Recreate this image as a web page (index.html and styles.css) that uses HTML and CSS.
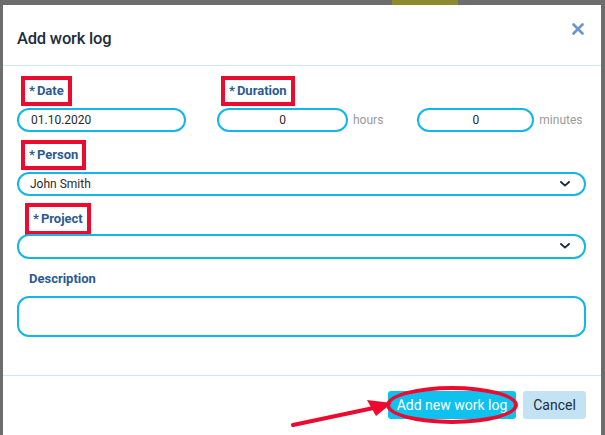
FILE: index.html
```html
<!DOCTYPE html>
<html>
<head>
<meta charset="utf-8">
<link rel="stylesheet" href="styles.css">
</head>
<body>
<div class="page">
  <nav class="nav">
    <span class="nav-add"></span>
  </nav>
</div>

<div class="modal">
  <header class="modal-header">
    <h1 class="modal-title">Add work log</h1>
    <button class="close" aria-label="Close">
      <svg width="12" height="12" viewBox="0 0 12 12"><path d="M1.5 1.5 L10.5 10.5 M10.5 1.5 L1.5 10.5" stroke="#6a96c8" stroke-width="2.6" stroke-linecap="round"/></svg>
    </button>
  </header>

  <div class="modal-body">
    <div class="row-top">
      <div class="field field-date">
        <label class="lbl req mark">Date</label>
        <div class="input">01.10.2020</div>
      </div>
      <div class="field field-duration">
        <label class="lbl req mark">Duration</label>
        <div class="dur-row">
          <div class="input input-num input-hours">0</div>
          <span class="unit unit-hours">hours</span>
          <div class="input input-num input-min">0</div>
          <span class="unit">minutes</span>
        </div>
      </div>
    </div>

    <div class="field field-person">
      <label class="lbl req mark">Person</label>
      <div class="input select">John Smith
        <svg class="chev" width="10" height="6" viewBox="0 0 10 6"><path d="M1 1 L5 4.6 L9 1" fill="none" stroke="#1c2d3d" stroke-width="1.9" stroke-linecap="round" stroke-linejoin="round"/></svg>
      </div>
    </div>

    <div class="field field-next">
      <label class="lbl req mark mark-project">Project</label>
      <div class="input select select-project">
        <svg class="chev" width="10" height="6" viewBox="0 0 10 6"><path d="M1 1 L5 4.6 L9 1" fill="none" stroke="#1c2d3d" stroke-width="1.9" stroke-linecap="round" stroke-linejoin="round"/></svg>
      </div>
    </div>

    <div class="field field-desc">
      <label class="lbl plain">Description</label>
      <div class="input textarea"></div>
    </div>
  </div>

  <footer class="modal-footer">
    <div class="btn-wrap">
      <button class="btn btn-primary">Add new work log</button>
      <span class="ring"></span>
    </div>
    <button class="btn btn-cancel">Cancel</button>
    <svg class="arrow" width="110" height="32" viewBox="0 0 110 32">
      <line x1="2" y1="29" x2="92" y2="10" stroke="#ec0a2e" stroke-width="4" stroke-linecap="round"/>
      <polygon points="101,7 76,4 85,20" fill="#ec0a2e"/>
    </svg>
  </footer>
</div>
</body>
</html>
```

FILE: styles.css
```css
* { box-sizing: border-box; }

html, body {
  margin: 0;
  padding: 0;
}

body {
  width: 605px;
  height: 435px;
  overflow: hidden;
  background: #6d6d6d;
  font-family: Roboto, "Liberation Sans", sans-serif;
  position: relative;
}

.page {
  height: 435px;
}

.nav {
  height: 5px;
  padding-left: 392px;
  display: flex;
}

.nav-add {
  display: block;
  width: 66px;
  height: 5px;
  background: #8e8b2f;
}

/* modal */
.modal {
  position: absolute;
  left: 3px;
  top: 5px;
  width: 598px;
  height: 440px;
  background: #fff;
}

.modal-header {
  height: 61px;
  border-bottom: 1px solid #cfe8f6;
  display: flex;
  align-items: center;
  justify-content: space-between;
  padding: 6px 17px 0 14px;
}

.modal-title {
  margin: 0;
  font-size: 16.5px;
  font-weight: 500;
  color: #1c2d3d;
  letter-spacing: -0.2px;
}

.close {
  border: 0;
  background: none;
  padding: 0;
  margin-top: -18px;
  width: 12px;
  height: 12px;
  display: flex;
}

.modal-body {
  padding: 10px 15px 0 14px;
  height: 310px;
  border-bottom: 1px solid #cfe8f6;
}

.row-top {
  display: flex;
  gap: 31px;
}

.field-date { width: 169px; }

.field {
  display: flex;
  flex-direction: column;
  align-items: flex-start;
}

.field-person { margin-top: 8px; }
.field-next { margin-top: 7px; }
.field-desc { margin-top: 5px; }

.lbl {
  display: inline-block;
  height: 30px;
  line-height: 22px;
  border: 4px solid transparent;
  padding: 0 4px;
  margin-left: 4px;
  font-size: 13px;
  font-weight: 700;
  color: #2b5b92;
}

.lbl.mark { border-color: #ec0a2e; }

.req::before {
  content: "*";
  margin-right: 2px;
  font-weight: 700;
}

.mark-project {
  margin-left: 8px;
  height: 32px;
  line-height: 24px;
  margin-bottom: -1px;
}

.input {
  margin-top: 2px;
  height: 24px;
  border: 2px solid #12b7e8;
  border-radius: 12px;
  font-size: 12px;
  line-height: 20px;
  color: #2a2a2a;
  padding: 0 12px;
  width: 100%;
}

.dur-row {
  display: flex;
  align-items: center;
  margin-top: 2px;
}

.dur-row .input { margin-top: 0; }

.input-num { text-align: center; }
.input-hours { width: 131px; }
.input-min { width: 117px; }

.unit {
  font-size: 12px;
  color: #9a9a9a;
  margin-left: 5px;
}

.unit-hours { margin-right: 34px; }

.select {
  position: relative;
  padding-left: 11px;
  width: 569px;
}

.chev {
  position: absolute;
  right: 14px;
  top: 7px;
}

.select-project { margin-top: 0; height: 25px; }

.textarea {
  height: 41px;
  width: 569px;
  border-radius: 12px;
}

.modal-footer {
  display: flex;
  justify-content: flex-end;
  gap: 7px;
  padding: 15px 15px 0 0;
  position: relative;
}

.btn {
  height: 28px;
  border: 0;
  border-radius: 3px;
  font-family: Roboto, "Liberation Sans", sans-serif;
  font-size: 14px;
  padding: 0;
  cursor: pointer;
}

.btn-wrap {
  position: relative;
  display: flex;
}

.btn-primary {
  width: 128px;
  background: #0ec1ef;
  color: #fff;
}

.ring {
  position: absolute;
  left: -2px;
  right: -2px;
  top: -5px;
  bottom: -5px;
  border: 4px solid #ec0a2e;
  border-radius: 50%;
}

.btn-cancel {
  width: 63px;
  background: #c3e3f5;
  color: #1c2d3d;
}

.arrow {
  position: absolute;
  left: 288px;
  top: 20px;
}
```
